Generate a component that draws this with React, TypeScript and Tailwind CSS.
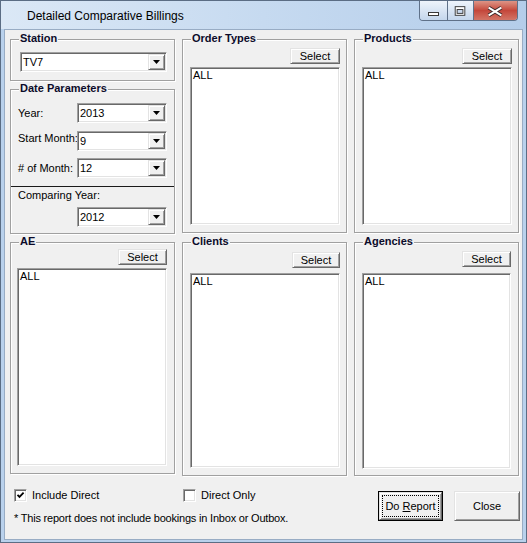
import React from 'react';

const raised =
  'bg-[#f0f0f0] border border-t-[#e3e3e3] border-l-[#e3e3e3] border-r-[#696969] border-b-[#696969] shadow-[inset_1px_1px_0_#fff,inset_-1px_-1px_0_#a0a0a0]';
const sunken =
  'bg-white border border-t-[#a0a0a0] border-l-[#a0a0a0] border-r-white border-b-white shadow-[inset_1px_1px_0_#696969,inset_-1px_-1px_0_#e3e3e3]';

function Arrow() {
  return (
    <svg width="7" height="4" viewBox="0 0 7 4">
      <path d="M0 0h7L3.5 4z" fill="#000" />
    </svg>
  );
}

function Combo({ value, className = '' }: { value: string; className?: string }) {
  return (
    <div className={`flex h-[20px] shrink-0 ${sunken} ${className}`}>
      <span className="flex-1 pl-[2px] pt-[2px] leading-[14px] text-black">{value}</span>
      <span className={`m-[1px] flex w-[17px] items-center justify-center ${raised}`}>
        <Arrow />
      </span>
    </div>
  );
}

function SelectButton({ className = '' }: { className?: string }) {
  return (
    <button className={`flex h-[16px] items-center justify-center self-end leading-[13px] text-black ${raised} ${className}`}>
      Select
    </button>
  );
}

function ListBox({ className = '' }: { className?: string }) {
  return (
    <div className={`w-full ${sunken} ${className}`}>
      <div className="pl-[2px] pt-[1px] leading-[13px] text-black">ALL</div>
    </div>
  );
}

function Group({
  label,
  className = '',
  children,
}: {
  label: string;
  className?: string;
  children?: React.ReactNode;
}) {
  return (
    <div
      className={`relative border border-[#a0a0a0] shadow-[inset_1px_1px_0_#fff,1px_1px_0_#fff] ${className}`}
    >
      <span className="absolute left-[8px] top-[-8px] bg-[#f0f0f0] px-[1px] text-[11px] font-bold leading-[13px] text-[#0b0b2a]">
        {label}
      </span>
      {children}
    </div>
  );
}

function CheckBox({ checked, label }: { checked?: boolean; label: string }) {
  return (
    <div className="flex h-[13px] items-center">
      <span className={`flex h-[13px] w-[13px] shrink-0 items-center justify-center ${sunken}`}>
        {checked && (
          <svg width="9" height="9" viewBox="0 0 9 9">
            <path d="M1.5 3.8 3.5 5.9 7.6 1.7" fill="none" stroke="#000" strokeWidth="1.8" />
          </svg>
        )}
      </span>
      <span className="ml-[5px] leading-[13px] text-black">{label}</span>
    </div>
  );
}

function DateRow({
  label,
  value,
  className = '',
  labelClass = '',
}: {
  label: string;
  value: string;
  className?: string;
  labelClass?: string;
}) {
  return (
    <div className={`flex h-[20px] items-center ${className}`}>
      <span className={`w-[59px] whitespace-nowrap leading-[13px] text-black ${labelClass}`}>{label}</span>
      <Combo value={value} className="w-[90px]" />
    </div>
  );
}

export default function App() {
  return (
    <div className="flex h-[543px] w-[527px] flex-col border border-[#5b6d84] bg-[#b9d1ec] font-['Liberation_Sans',Arial,sans-serif] text-[11px]">
      {/* Title bar */}
      <div className="flex h-[28px] shrink-0 items-start bg-gradient-to-r from-[#dbe8f6] via-[#c6daf0] to-[#b4cdea]">
        <span className="pl-[26px] pt-[8px] text-[12px] leading-[15px] text-black">
          Detailed Comparative Billings
        </span>
        <div className="ml-auto mr-[8px] flex h-[20px] overflow-hidden rounded-b-[4px] border border-t-0 border-[#5f7189]">
          <span className="flex w-[27px] bg-gradient-to-b from-[#eef4fb] to-[#c4d6ec]">
            <svg width="27" height="19" viewBox="0 0 27 19">
              <rect x="8.5" y="11.5" width="10" height="3" fill="#fff" stroke="#3a3a3a" />
            </svg>
          </span>
          <span className="flex w-[26px] border-l border-[#5f7189] bg-gradient-to-b from-[#eef4fb] to-[#c4d6ec]">
            <svg width="26" height="19" viewBox="0 0 26 19">
              <rect x="7.5" y="5.5" width="10" height="9" fill="#fff" stroke="#3a3a3a" />
              <rect x="9.5" y="8.5" width="6" height="4" fill="#c9d9ee" stroke="#3a3a3a" />
            </svg>
          </span>
          <span className="flex w-[44px] border-l border-[#5f7189] bg-gradient-to-b from-[#dd9486] via-[#c4473b] to-[#d27466]">
            <svg width="44" height="19" viewBox="0 0 44 19">
              <path d="M15 6.5 28 14.5M28 6.5 15 14.5" stroke="#3a2a2a" strokeWidth="4" />
              <path d="M15 6.5 28 14.5M28 6.5 15 14.5" stroke="#fff" strokeWidth="2" />
            </svg>
          </span>
        </div>
      </div>

      {/* Client area */}
      <div className="mx-[3px] h-[511px] border border-[#98acc4] bg-[#f0f0f0] pl-[5px] pt-[9px]">
        <div className="grid grid-cols-[165px_165px_165px] items-start gap-x-[7px]">
          {/* Left column */}
          <div className="flex flex-col">
            <Group label="Station" className="h-[42px] pl-[9px] pt-[12px]">
              <Combo value="TV7" className="w-[147px]" />
            </Group>
            <Group label="Date Parameters" className="mt-[8px] h-[145px] pt-[13px]">
              <div className="pl-[7px]">
                <DateRow label="Year:" value="2013" />
                <DateRow label="Start Month:" value="9" className="mt-[8px]" labelClass="-mt-[5px]" />
                <DateRow label="# of Month:" value="12" className="mt-[7px]" />
              </div>
              <div className="mt-[8px] h-px bg-[#1a1a1a]" />
              <div className="mt-[2px] pl-[7px] leading-[13px] text-black">Comparing Year:</div>
              <div className="mt-[5px] pl-[66px]">
                <Combo value="2012" className="w-[90px]" />
              </div>
            </Group>
            <Group label="AE" className="mt-[8px] flex h-[232px] flex-col pl-[6px] pr-[7px] pt-[6px]">
              <SelectButton className="w-[49px]" />
              <ListBox className="mt-[3px] h-[198px]" />
            </Group>
          </div>

          {/* Middle column */}
          <div className="flex flex-col">
            <Group label="Order Types" className="flex h-[194px] flex-col pl-[7px] pr-[6px] pt-[8px]">
              <SelectButton className="w-[50px]" />
              <ListBox className="mt-[3px] h-[158px]" />
            </Group>
            <Group label="Clients" className="mt-[9px] flex h-[234px] flex-col pl-[7px] pr-[6px] pt-[9px]">
              <SelectButton className="w-[48px]" />
              <ListBox className="mt-[5px] h-[195px]" />
            </Group>
          </div>

          {/* Right column */}
          <div className="flex flex-col">
            <Group label="Products" className="flex h-[194px] flex-col pl-[7px] pr-[6px] pt-[8px]">
              <SelectButton className="w-[50px]" />
              <ListBox className="mt-[3px] h-[158px]" />
            </Group>
            <Group label="Agencies" className="mt-[9px] flex h-[234px] flex-col pl-[7px] pr-[7px] pt-[8px]">
              <SelectButton className="w-[49px]" />
              <ListBox className="mt-[6px] h-[196px]" />
            </Group>
          </div>
        </div>

        {/* Bottom row */}
        <div className="mt-[13px] flex items-start pl-[4px] pr-[2px]">
          <div className="flex flex-col">
            <div className="flex">
              <div className="w-[169px]">
                <CheckBox checked label="Include Direct" />
              </div>
              <CheckBox label="Direct Only" />
            </div>
            <div className="mt-[10px] whitespace-nowrap leading-[13px] tracking-[-0.2px] text-black">
              * This report does not include bookings in Inbox or Outbox.
            </div>
          </div>
          <div className="ml-auto mt-[2px] flex gap-[11px]">
            <button className="h-[30px] w-[65px] border border-black bg-[#f0f0f0] p-0">
              <span className={`flex h-full w-full items-center justify-center ${raised}`}>
                <span className="flex h-[22px] w-[57px] items-center justify-center border border-dotted border-black leading-[13px] text-black">
                  Do&nbsp;<span className="underline underline-offset-[1px]">R</span>eport
                </span>
              </span>
            </button>
            <button className={`h-[30px] w-[66px] leading-[13px] text-black ${raised}`}>Close</button>
          </div>
        </div>
      </div>
    </div>
  );
}
